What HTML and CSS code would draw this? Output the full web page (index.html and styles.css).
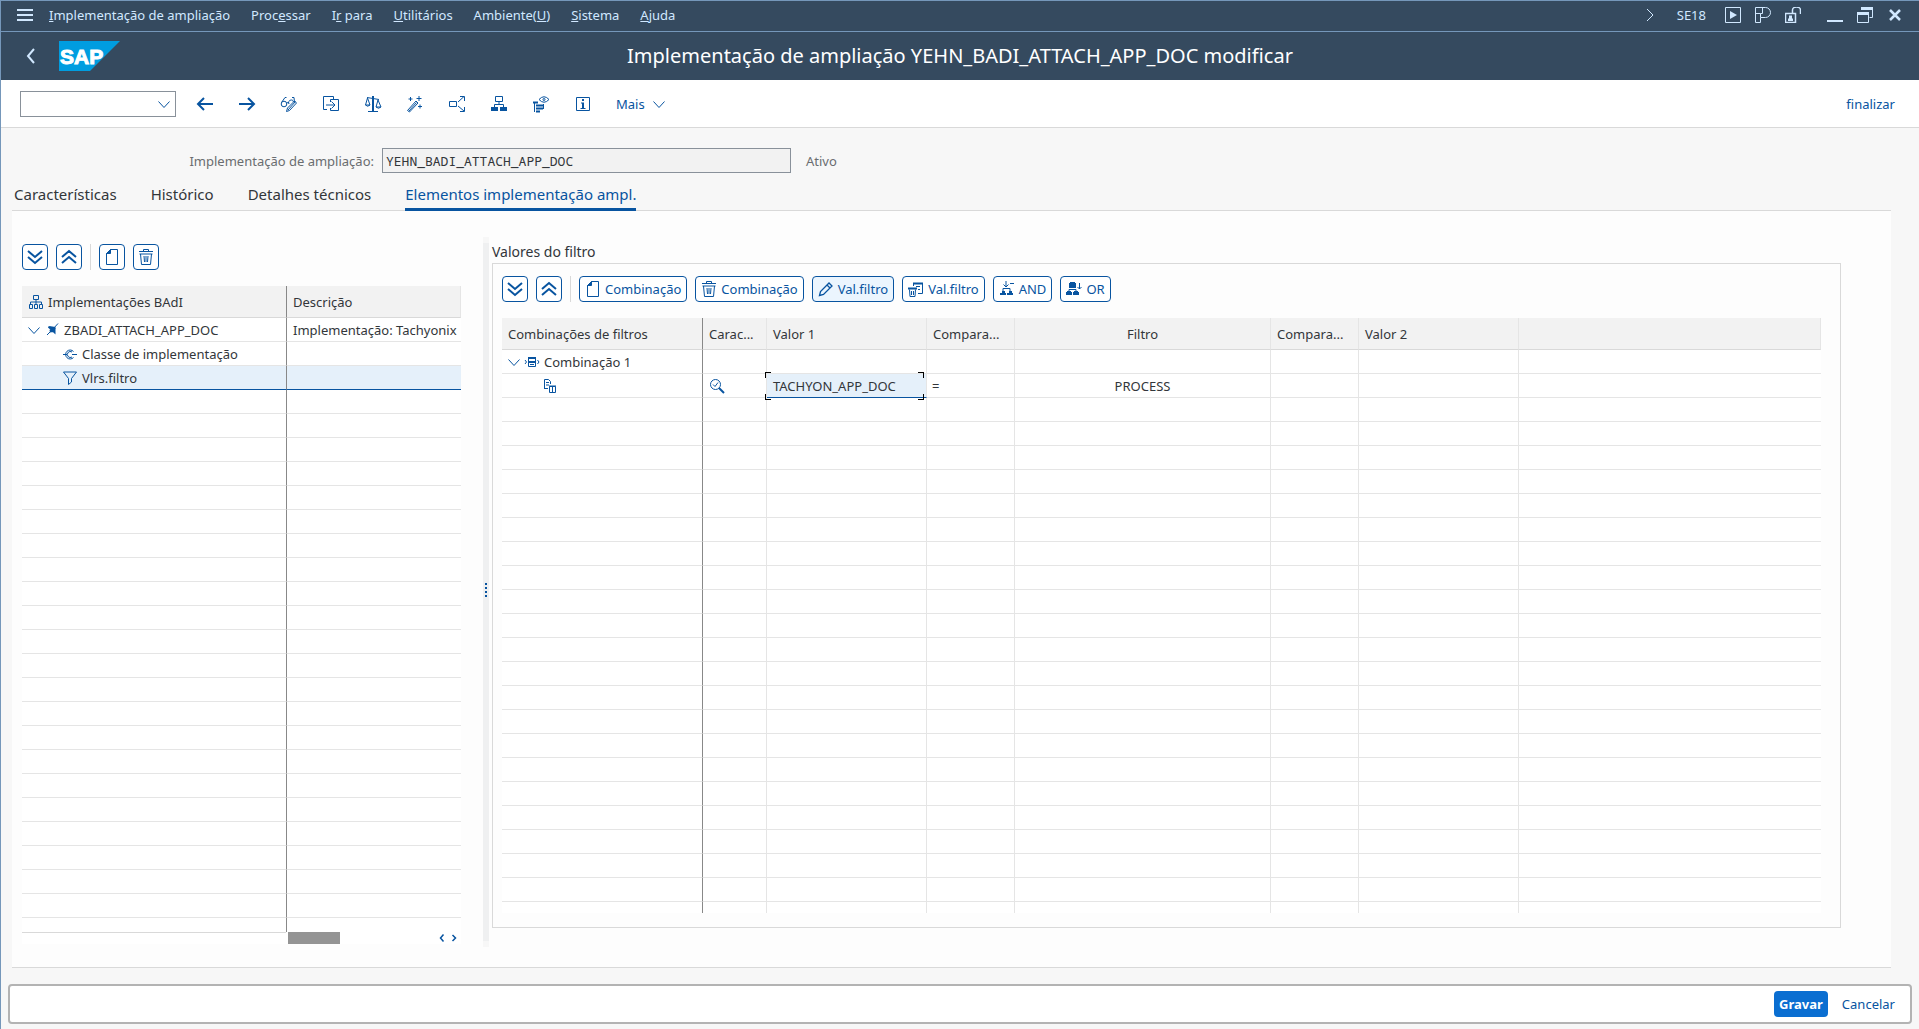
FILE: index.html
```html
<!DOCTYPE html>
<html lang="pt">
<head>
  <meta charset="UTF-8">
  <meta name="viewport" content="width=device-width, initial-scale=1.0">
  <title>Implementação de ampliação YEHN_BADI_ATTACH_APP_DOC modificar</title>
  <link rel="stylesheet" href="styles.css">
</head>
<body>
  <!-- Shared icons -->
  <svg class="defs" aria-hidden="true">
    <symbol id="i-down" viewBox="0 0 16 16"><path d="M2.500 5.500l5.500 6 5.500-6"/></symbol>
    <symbol id="i-right" viewBox="0 0 16 16"><path d="M5 2l6 6-6 6"/></symbol>
    <symbol id="i-left" viewBox="0 0 16 16"><path d="M11 1L5 8l6 7"/></symbol>
    <symbol id="i-expand" viewBox="0 0 16 16"><path d="M1 2l7 6 7-6M1 8l7 6 7-6" stroke-width="2"/></symbol>
    <symbol id="i-collapse" viewBox="0 0 16 16"><path d="M1 8l7-6 7 6M1 14l7-6 7 6" stroke-width="2"/></symbol>
    <symbol id="i-page" viewBox="0 0 16 16"><path d="M6.500 .5h7v15h-11V4.500z"/><path d="M2.500 4.500l4-4v4z" fill="currentColor"/></symbol>
    <symbol id="i-trash" viewBox="0 0 16 16"><path d="M1 2.500h14M5.500 2V.5h5V2M2.500 5l1 10.500h9L13.500 5M1.500 5h13M6 7l.5 6M8 7v6M10 7l-.5 6"/></symbol>
    <symbol id="i-tree" viewBox="0 0 16 16"><path d="M5.500 1.500h5v4h-5zM8 6v4M2.500 10V8h11v2"/><path d="M1.500 10.500h3v4h-3zM6.500 10.500h3v4h-3zM11.500 10.500h3v4h-3z"/></symbol>
    <symbol id="i-filter" viewBox="0 0 16 16"><path d="M1.500 2h13L9.500 8.500V12L6.500 14.500v-6z"/></symbol>
  </svg>

  <div class="window">
    <!-- Menu bar -->
    <nav class="menubar">
      <button class="burger" aria-label="Menu"><svg width="16" height="14" viewBox="0 0 16 14"><path d="M0 2h16M0 7h16M0 12h16" stroke-width="2"/></svg></button>
      <a href="#"><u>I</u>mplementação de ampliação</a>
      <a href="#">Proc<u>e</u>ssar</a>
      <a href="#">I<u>r</u> para</a>
      <a href="#"><u>U</u>tilitários</a>
      <a href="#">Ambiente(<u>U</u>)</a>
      <a href="#"><u>S</u>istema</a>
      <a href="#"><u>A</u>juda</a>
      <div class="system">
        <button aria-label="Expandir"><svg width="16" height="16"><use href="#i-right"/></svg></button>
        <span class="tcode">SE18</span>
        <button aria-label="Executar"><svg width="16" height="16" viewBox="0 0 16 16"><path d="M.5.5h15v15H.5z"/><path d="M5 4l7 4-7 4z" fill="currentColor" stroke="none"/></svg></button>
        <button aria-label="Personalizar"><svg width="16" height="16" viewBox="0 0 16 16"><path d="M.5.500h10a5 5 0 0 1 0 10h-5v5h-5zM.5 6.500h5v4M7.500 .5v6h-2"/></svg></button>
        <button aria-label="Bloquear"><svg width="16" height="16" viewBox="0 0 16 16"><path d="M.5 6.500h10v9H.5zM7.500 6.500V3a4 3 0 0 1 8 0v4" stroke-width="1.500"/><path d="M4 8.500h3v3h1V14H3v-2.500h1z" fill="currentColor" stroke="none"/></svg></button>
        <button class="minimize" aria-label="Minimizar"><svg width="16" height="16" viewBox="0 0 16 16"><path d="M0 14h16" stroke-width="2"/></svg></button>
        <button aria-label="Restaurar"><svg width="16" height="16" viewBox="0 0 16 16"><path d="M.5 5.500h11v10H.5z"/><path d="M0 6.500h12M4 1.500h11" stroke-width="3"/><path d="M15.500 0v10.500h-3"/></svg></button>
        <button aria-label="Fechar"><svg width="16" height="16" viewBox="0 0 16 16"><path d="M3 3l10 10M13 3L3 13" stroke-width="2.500"/></svg></button>
      </div>
    </nav>

    <!-- Title bar -->
    <header class="titlebar">
      <button class="back" aria-label="Voltar"><svg width="16" height="16"><use href="#i-left"/></svg></button>
      <svg class="logo" width="61" height="30" viewBox="0 0 61 30" role="img" aria-label="SAP">
        <path d="M0 0h61L31 30H0z" fill="#009de0" stroke="none"/>
        <text x="1" y="23">SAP</text>
      </svg>
      <h1>Implementação de ampliação YEHN_BADI_ATTACH_APP_DOC modificar</h1>
    </header>

    <!-- Function toolbar -->
    <div class="toolbar">
      <div class="command">
        <input type="text" aria-label="Comando">
        <svg width="16" height="16"><use href="#i-down"/></svg>
      </div>
      <button aria-label="Voltar"><svg width="18" height="18" viewBox="0 0 18 18"><path d="M17 9H2M8 3L2 9l6 6" stroke-width="2"/></svg></button>
      <button aria-label="Avançar"><svg width="18" height="18" viewBox="0 0 18 18"><path d="M1 9h15M10 3l6 6-6 6" stroke-width="2"/></svg></button>
      <button aria-label="Exibir / modificar"><svg width="18" height="18" viewBox="0 0 18 18"><circle cx="4" cy="9" r="2.800"/><path d="M1.500 7.500l3.500-5h1.500M6.800 8q1.200-1 2.200 0M9 9a2.500 2.500 0 1 1 4.500-2M14.500 7.500L14 2.500h-2"/><path d="M6.500 16.500l1-3.500 7-7 2 2-7 7.500zM8 15l7.500-8.500"/></svg></button>
      <button aria-label="Outro objeto"><svg width="18" height="18" viewBox="0 0 18 18"><path d="M5 14.500H1.500v-13h10V4M8.500 7V4.500h8v11h-8V13"/><path d="M4 10h9M9.500 6.500L13 10l-3.500 3.500"/></svg></button>
      <button aria-label="Verificar"><svg width="18" height="18" viewBox="0 0 18 18"><path d="M9 1v15" stroke-width="2"/><path d="M4 16.500h10M3 2.500l6 1 6 1M3.500 3L1.500 10h4.500zM14 5l-2 7h5zM1.500 10q2 2.500 4.500 0M12 12q2.500 2.500 5 0"/></svg></button>
      <button aria-label="Ativar"><svg width="18" height="18" viewBox="0 0 18 18"><path d="M1.500 15.500L10 6l2 2-8.500 9zM3 16l7.500-8.500"/><path d="M2.500 4h4M4.500 2v4M10.500 3.500h5M13 1v5M12 11.500h4M14 9.500v4"/></svg></button>
      <button aria-label="Onde é utilizado"><svg width="18" height="18" viewBox="0 0 18 18"><path d="M1.500 6.500h7v5h-7zM10 7l6-5.500M10 11l6 5M12 1.500h4.500V6M16.500 12v4.500H12"/></svg></button>
      <button aria-label="Hierarquia"><svg width="18" height="18" viewBox="0 0 18 18"><path d="M5.500 1.500h7v5h-7zM9 7v3M4.500 12V9.500h9V12"/><path d="M1 12h7v4H1zM10 12h7v4h-7z" fill="currentColor" stroke="none"/></svg></button>
      <button aria-label="Exibir lista"><svg width="18" height="18" viewBox="0 0 18 18"><path d="M7 4.500q5-5.500 10 0-5 5.500-10 0z"/><circle cx="12" cy="4.500" r="1"/><path d="M1 7.500h5M4 10.500h7M4 13.500h7M4 16.500h4" stroke-width="2"/><path d="M2.500 7v10M11.500 9v5"/></svg></button>
      <button aria-label="Informação"><svg width="18" height="18" viewBox="0 0 18 18"><path d="M2.500 2.500h13v13h-13z"/><path d="M8 4h2v2H8zM7 7.500h3V13h1.500v1h-5v-1H8V8.500H7z" fill="currentColor" stroke="none"/></svg></button>
      <button class="more">Mais <svg width="16" height="16"><use href="#i-down"/></svg></button>
      <a class="finish" href="#">finalizar</a>
    </div>

    <main>
      <div class="field">
        <label for="impl">Implementação de ampliação:</label>
        <input id="impl" type="text" value="YEHN_BADI_ATTACH_APP_DOC" readonly>
        <span>Ativo</span>
      </div>

      <div class="tabs">
        <a href="#">Características</a>
        <a href="#">Histórico</a>
        <a href="#">Detalhes técnicos</a>
        <a href="#" class="active">Elementos implementação ampl.</a>
      </div>

      <div class="panel">
        <!-- BAdI tree -->
        <section class="tree">
          <div class="actions">
            <button class="square" aria-label="Expandir tudo"><svg width="16" height="16"><use href="#i-expand"/></svg></button>
            <button class="square" aria-label="Comprimir tudo"><svg width="16" height="16"><use href="#i-collapse"/></svg></button>
            <span class="divider"></span>
            <button class="square" aria-label="Criar"><svg width="16" height="16"><use href="#i-page"/></svg></button>
            <button class="square" aria-label="Eliminar"><svg width="16" height="16"><use href="#i-trash"/></svg></button>
          </div>
          <table id="badi" data-empty="22">
            <colgroup><col class="c-name"><col></colgroup>
            <thead>
              <tr>
                <th><div class="cell"><svg width="16" height="16"><use href="#i-tree"/></svg>Implementações BAdI</div></th>
                <th>Descrição</th>
              </tr>
            </thead>
            <tbody>
              <tr>
                <td><div class="cell"><svg width="12" height="16" viewBox="0 0 12 16"><path d="M.5 5.500l5.500 6 5.500-6"/></svg><svg width="16" height="16" viewBox="0 0 16 16"><path d="M3 13l4-4M9 7l5-5.500"/><path d="M4 4.500l6 .5 2 1-1 1.500.5 5L4 5.500zM5 4l6.500 1v7L9 10l-3 .5L5.500 8 7 7z" fill="currentColor" stroke="none"/></svg>ZBADI_ATTACH_APP_DOC</div></td>
                <td>Implementação: Tachyonix</td>
              </tr>
              <tr>
                <td><div class="cell level2"><svg width="16" height="16" viewBox="0 0 16 16"><path d="M1 8.500h4M10 8.500h5"/><path d="M11.500 5.500a4.500 4.500 0 1 0 0 6M10 6a3 3 0 1 0 0 5"/></svg>Classe de implementação</div></td>
                <td></td>
              </tr>
              <tr class="selected">
                <td><div class="cell level2"><svg width="16" height="16"><use href="#i-filter"/></svg>Vlrs.filtro</div></td>
                <td></td>
              </tr>
            </tbody>
          </table>
          <div class="scroll">
            <div class="track"><span class="thumb"></span></div>
            <button aria-label="Rolar à esquerda"><svg width="8" height="8"><use href="#i-left"/></svg></button>
            <button aria-label="Rolar à direita"><svg width="8" height="8"><use href="#i-right"/></svg></button>
          </div>
        </section>

        <div class="splitter"><i></i><i></i><i></i><i></i></div>

        <!-- Filter values -->
        <section class="filters">
          <h2>Valores do filtro</h2>
          <div class="group">
            <div class="actions">
              <button class="square" aria-label="Expandir tudo"><svg width="16" height="16"><use href="#i-expand"/></svg></button>
              <button class="square" aria-label="Comprimir tudo"><svg width="16" height="16"><use href="#i-collapse"/></svg></button>
              <span class="divider"></span>
              <button><svg width="16" height="16"><use href="#i-page"/></svg>Combinação</button>
              <button><svg width="16" height="16"><use href="#i-trash"/></svg>Combinação</button>
              <button class="pressed"><svg width="16" height="16" viewBox="0 0 16 16"><path d="M1.500 14.500l1-4L11 2l3 3-8.500 8.500zM9 4l3 3" stroke-width="1.300"/></svg>Val.filtro</button>
              <button><svg width="16" height="16" viewBox="0 0 16 16"><path d="M5.500 5V2M14.500 2v10.500H10M12 5.500H8M12 8.500h-2"/><path d="M5 2.500h10M0 7.500h9" stroke-width="2"/><path d="M1.500 8.500l.5 7h5l.5-7M3.500 10v4M5.500 10v4"/></svg>Val.filtro</button>
              <button><svg width="16" height="16" viewBox="0 0 16 16"><path d="M7 0v6M4.500 3.500L7 6l2.500-2.500M4 10V7.500h7V10M11 2.500h4"/><path d="M3 10h3v2h1v2H1v-2h2zM10 10h3v2h1v2H8v-2h2z" fill="currentColor" stroke="none"/></svg>AND</button>
              <button><svg width="16" height="16" viewBox="0 0 16 16"><path d="M4 1h5v1h1v5H3V2h1zM1 10h4v1h1v3H0v-3h1zM8 10h4v1h1v3H7v-3h1z" fill="currentColor" stroke="none"/><path d="M3 10V8.500h7V10M13.500 2v6M11.500 6l2 2 2-2"/></svg>OR</button>
            </div>
            <table id="values" data-empty="21">
              <colgroup><col class="c-comb"><col class="c-char"><col class="c-val"><col class="c-comp"><col class="c-filter"><col class="c-comp"><col class="c-val"><col></colgroup>
              <thead>
                <tr>
                  <th>Combinações de filtros</th>
                  <th>Carac...</th>
                  <th>Valor 1</th>
                  <th>Compara...</th>
                  <th class="center">Filtro</th>
                  <th>Compara...</th>
                  <th>Valor 2</th>
                  <th></th>
                </tr>
              </thead>
              <tbody>
                <tr>
                  <td><div class="cell"><svg width="12" height="16" viewBox="0 0 12 16"><path d="M.5 5.500l5.500 6 5.500-6"/></svg><svg width="16" height="16" viewBox="0 0 16 16"><path d="M4.500 3.500h7v9h-7zM1 6l1.500 2L1 10M13.500 6L15 8l-1.500 2M6 10.500h4"/><path d="M4 4h8M4 8h8" stroke-width="2"/></svg>Combinação 1</div></td>
                  <td></td><td></td><td></td><td></td><td></td><td></td><td></td>
                </tr>
                <tr>
                  <td><div class="cell level3"><svg width="16" height="16" viewBox="0 0 16 16"><path d="M2.500 10.500v-9h4l2 2V6M4 4.500h3M4 7h3M2 10.500h4M7.500 8.500h6v6h-6zM7 8h7M10.500 9v5"/></svg></div></td>
                  <td><svg class="lens" width="16" height="16" viewBox="0 0 16 16"><circle cx="6.500" cy="6.500" r="5"/><path d="M4 6.500l2 2 3-4"/><path d="M10 10l5 5" stroke-width="2"/></svg></td>
                  <td class="focus">TACHYON_APP_DOC</td>
                  <td class="eq">=</td>
                  <td class="center">PROCESS</td>
                  <td></td><td></td><td></td>
                </tr>
              </tbody>
            </table>
          </div>
        </section>
      </div>
    </main>

    <footer>
      <button class="primary">Gravar</button>
      <button>Cancelar</button>
    </footer>
  </div>

  <script>
    // Fill the rest of each grid with empty rows
    document.querySelectorAll("table").forEach(function (table) {
      const body = table.tBodies[0];
      const columns = table.tHead.rows[0].cells.length;
      for (let i = 0; i <= Number(table.dataset.empty); i++) {
        const row = body.insertRow();
        for (let c = 0; c < columns; c++) {
          row.insertCell();
        }
      }
      body.lastElementChild.className = "last";
    });
  </script>
</body>
</html>
```
FILE: styles.css
```css
/* General styling */
* {
  box-sizing: border-box;
}

body {
  margin: 0;
  font-family: "Noto Sans", "Open Sans", sans-serif;
  font-size: 13px;
  line-height: 18px;
  color: #32363a;
  background: #f7f7f7;
}

button,
input {
  font: inherit;
  color: inherit;
}

button {
  display: flex;
  align-items: center;
  justify-content: center;
  padding: 0;
  border: none;
  background: none;
  cursor: pointer;
}

a {
  color: inherit;
  text-decoration: none;
}

svg {
  flex: none;
  fill: none;
  stroke: currentColor;
}

.defs {
  position: absolute;
  width: 0;
  height: 0;
}

.window {
  display: flex;
  flex-direction: column;
  min-height: 100vh;
  border-left: 1px solid #7597ba;
}

/* Menu bar */
.menubar {
  display: flex;
  align-items: center;
  gap: 21px;
  height: 32px;
  padding: 0 16px 2px;
  border-top: 1px solid #7597ba;
  border-bottom: 1px solid #7597ba;
  background: #354a5f;
  color: #d1e8ff;
  white-space: nowrap;
}

.burger {
  margin-right: -5px;
}

.system {
  display: flex;
  align-items: center;
  gap: 14px;
  margin-left: auto;
}

.tcode {
  margin: 0 5px;
}

.minimize {
  margin-left: 12px;
}

/* Title bar */
.titlebar {
  display: grid;
  grid-template-columns: 16px 61px 1fr 97px;
  align-items: center;
  column-gap: 20px;
  height: 48px;
  padding: 0 22px;
  background: #354a5f;
  color: #fff;
}

.titlebar h1 {
  margin: 0;
  font-size: 20px;
  font-weight: 400;
  line-height: 24px;
  text-align: center;
}

.back {
  color: #d1e8ff;
}

.back svg {
  stroke-width: 2;
}

.logo text {
  fill: #fff;
  stroke: #fff;
  font-family: "Liberation Sans", sans-serif;
  font-size: 21px;
  font-weight: 700;
}

/* Toolbar */
.toolbar {
  display: flex;
  align-items: center;
  gap: 24px;
  height: 48px;
  padding: 0 24px 0 19px;
  border-bottom: 1px solid #d9d9d9;
  background: #fff;
  color: #0854a0;
}

.command {
  display: flex;
  align-items: center;
  width: 156px;
  height: 26px;
  margin-right: -4px;
  padding-right: 3px;
  border: 1px solid #89919a;
}

.command input {
  flex: 1;
  min-width: 0;
  height: 24px;
  border: none;
  background: none;
  outline: none;
}

.more {
  gap: 6px;
}

.finish {
  margin-left: auto;
}

/* Header field */
main {
  flex: 1;
  display: flex;
  flex-direction: column;
  padding: 20px 28px 16px 11px;
}

.field {
  display: flex;
  align-items: center;
  color: #6a6d70;
}

.field label {
  width: 362px;
  text-align: right;
}

.field input {
  width: 409px;
  height: 25px;
  margin: 0 15px 0 8px;
  padding: 0 3px;
  border: 1px solid #89919a;
  background: #f2f2f2;
  color: #32363a;
  font-family: "Noto Sans Mono", "DejaVu Sans Mono", monospace;
  font-size: 13px;
}

/* Tabs */
.tabs {
  display: flex;
  gap: 34px;
  padding-left: 2px;
  border-bottom: 1px solid #d9d9d9;
  font-size: 15px;
}

.tabs a {
  height: 38px;
  margin-bottom: -1px;
  padding-top: 11px;
  line-height: 20px;
}

.tabs .active {
  border-bottom: 3px solid #0854a0;
  color: #0854a0;
}

/* Content panel */
.panel {
  flex: 1;
  display: flex;
  align-items: flex-start;
  padding: 26px 50px 20px 10px;
  border-bottom: 1px solid #d9d9d9;
  background: #fdfdfd;
}

.tree {
  width: 439px;
  padding-top: 7px;
}

.actions {
  display: flex;
  align-items: center;
  gap: 8px;
  margin-bottom: 16px;
}

.actions button {
  gap: 4px;
  height: 26px;
  padding: 0 5px;
  border: 1px solid #0854a0;
  border-radius: 4px;
  background: #fff;
  color: #0854a0;
}

.actions .square {
  width: 26px;
  padding: 0;
}

.actions .pressed {
  background: #ebf5fe;
}

.divider {
  width: 1px;
  height: 26px;
  background: #d9d9d9;
}

/* Grids */
table {
  width: 100%;
  border-collapse: separate;
  border-spacing: 0;
  table-layout: fixed;
  background: #fff;
}

th {
  height: 32px;
  padding: 0 6px;
  border-right: 1px solid #e5e5e5;
  border-bottom: 1px solid #d9d9d9;
  background: #f2f2f2;
  font-weight: 400;
  text-align: left;
  white-space: nowrap;
}

td {
  height: 24px;
  padding: 0 6px;
  border-right: 1px solid #e5e5e5;
  border-bottom: 1px solid #e5e5e5;
  line-height: 20px;
  white-space: nowrap;
}

td:last-child {
  padding-right: 0;
  border-right: none;
}

th:first-child,
td:first-child {
  border-right: 1px solid #888;
}

.center {
  text-align: center;
}

.last td {
  height: 11px;
  border-bottom: none;
}

.cell {
  display: flex;
  align-items: center;
  gap: 4px;
}

.cell svg,
.lens {
  color: #0854a0;
}

.lens {
  display: block;
}

.level2 {
  padding-left: 34px;
}

.level3 {
  padding-left: 34px;
}

.selected td {
  border-bottom-color: #0854a0;
  background: #e5f0fa;
}

.c-name {
  width: 265px;
}

.c-comb {
  width: 201px;
}

.c-char {
  width: 64px;
}

.c-val {
  width: 160px;
}

.c-comp {
  width: 88px;
}

.c-filter {
  width: 256px;
}

#badi .last td {
  height: 14px;
}

.eq {
  padding-left: 5px;
}

/* Selected cell with its four corner marks */
.focus {
  position: relative;
  border-bottom-color: #0854a0;
  background: #e5f0fa;
}

.focus::after {
  content: "";
  position: absolute;
  inset: -2px 2px -3px -2px;
  background:
    linear-gradient(#000, #000) 0 0 / 6px 1px,
    linear-gradient(#000, #000) 0 0 / 1px 6px,
    linear-gradient(#000, #000) 100% 0 / 6px 1px,
    linear-gradient(#000, #000) 100% 0 / 1px 6px,
    linear-gradient(#000, #000) 0 100% / 6px 1px,
    linear-gradient(#000, #000) 0 100% / 1px 6px,
    linear-gradient(#000, #000) 100% 100% / 6px 1px,
    linear-gradient(#000, #000) 100% 100% / 1px 6px;
  background-repeat: no-repeat;
}

/* Horizontal scroll bar */
.scroll {
  display: flex;
  align-items: center;
  gap: 4px;
  height: 12px;
  padding-right: 3px;
  background: #fff;
  color: #0854a0;
}

.scroll svg {
  stroke-width: 3;
}

.track {
  flex: 1;
  align-self: stretch;
}

.track::before {
  content: "";
  float: left;
  width: 264px;
  height: 1px;
  margin-right: 2px;
  background: #d9d9d9;
}

.thumb {
  float: left;
  width: 52px;
  height: 12px;
  background: #949494;
}

/* Splitter */
.splitter {
  display: flex;
  flex-direction: column;
  align-items: center;
  justify-content: center;
  gap: 2px;
  align-self: stretch;
  width: 6px;
  margin: 0 3px 0 22px;
  padding-bottom: 4px;
  border-top: 6px solid #f7f7f7;
  border-bottom: 6px solid #f7f7f7;
  background: #eff0f1;
}

.splitter i {
  width: 2px;
  height: 2px;
  background: #0854a0;
}

/* Filter values */
.filters {
  flex: 1;
  min-width: 0;
}

.filters h2 {
  margin: 5px 0 1px;
  font-size: 14px;
  font-weight: 400;
  line-height: 20px;
}

.group {
  padding: 12px 19px 14px 9px;
  border: 1px solid #d9d9d9;
}

/* Footer */
footer {
  display: flex;
  align-items: center;
  justify-content: flex-end;
  height: 40px;
  margin: 0 7px 5px;
  padding-right: 15px;
  border: 2px solid #b3b3b3;
  border-radius: 4px;
  background: #fff;
  color: #0854a0;
}

footer button {
  height: 26px;
  padding: 0 0 0 14px;
}

footer .primary {
  padding: 0 5px;
  border-radius: 4px;
  background: #0a6ed1;
  color: #fff;
  font-weight: 700;
}
```
